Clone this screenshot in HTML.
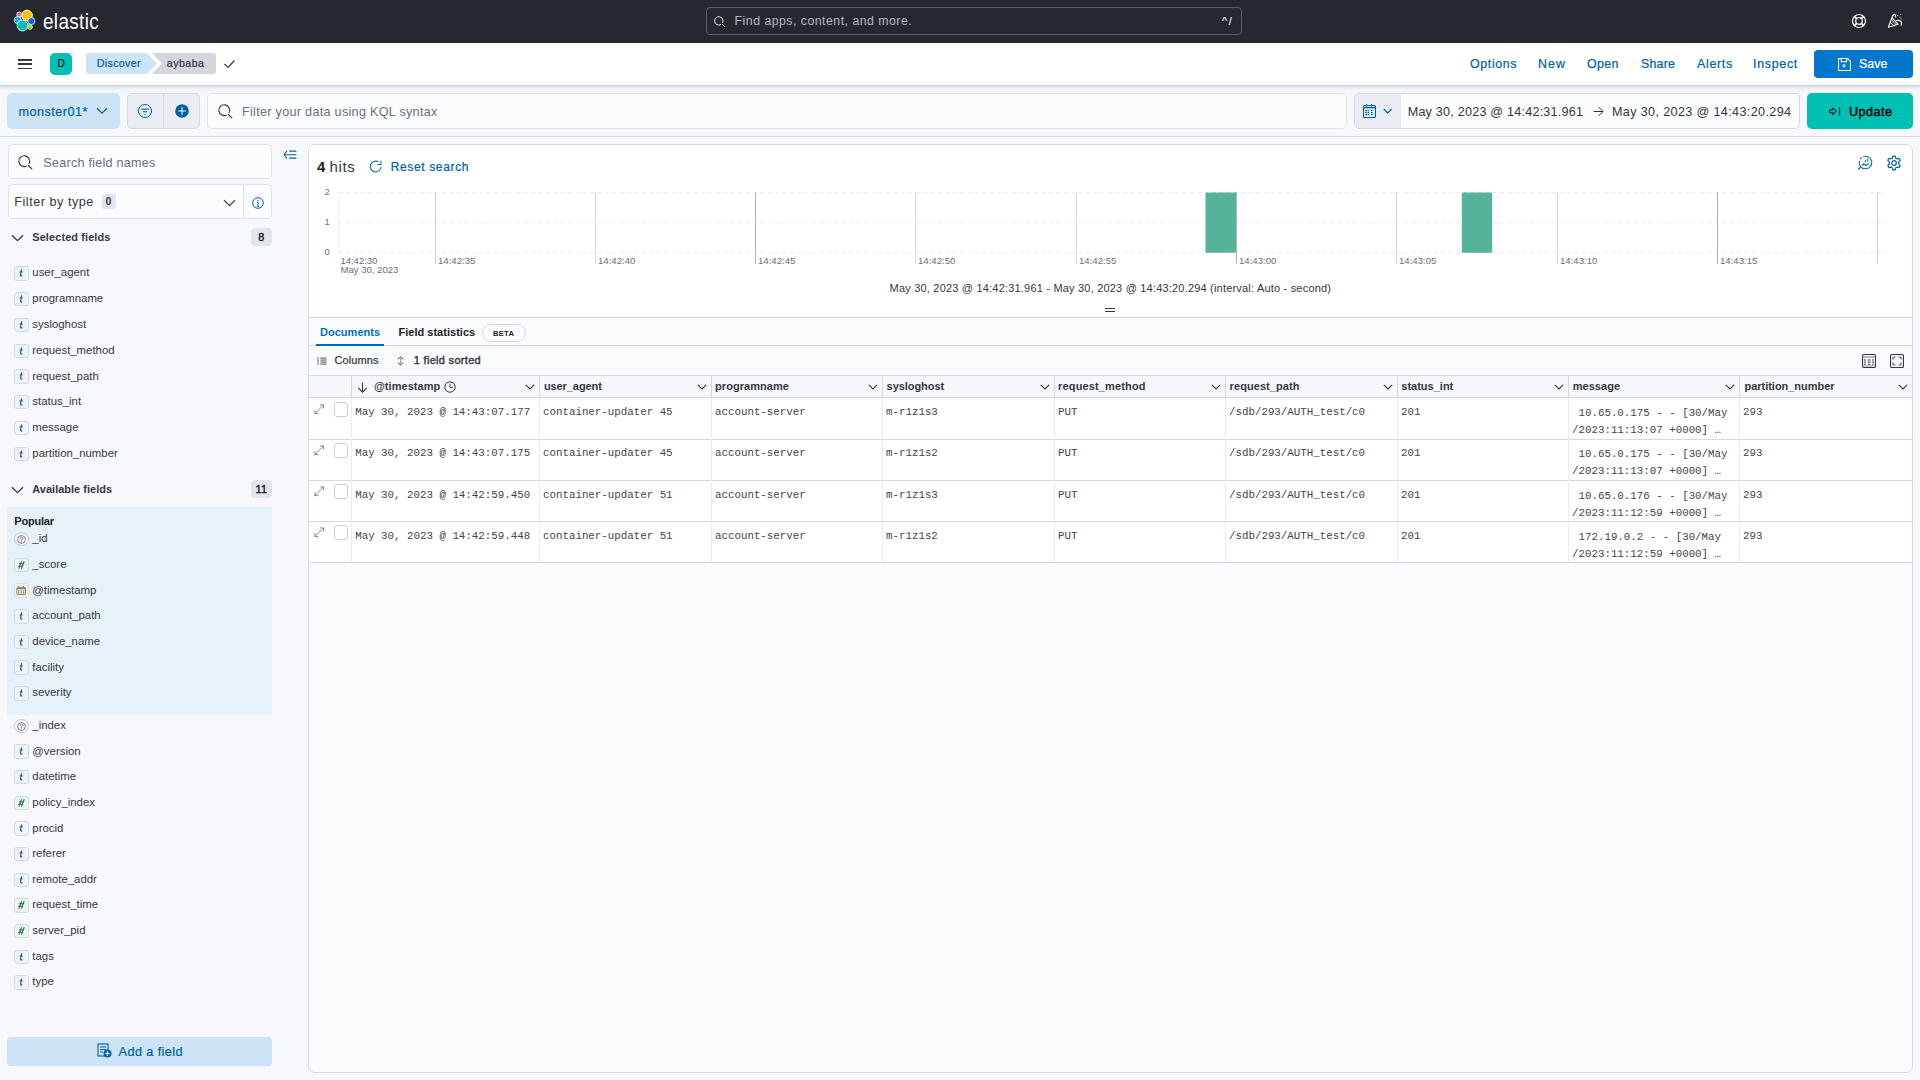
<!DOCTYPE html><html><head><meta charset="utf-8"><title>Discover - Elastic</title><style>
*{margin:0;padding:0}
html,body{width:1920px;height:1080px;overflow:hidden;background:#f7f8fc}
.a{position:absolute}
div.a{line-height:1;white-space:pre}
.s{font-family:"Liberation Sans",sans-serif}
.m{font-family:"Liberation Mono",monospace}
svg.a{overflow:visible}
</style></head><body><div class="a" style="left:0px;top:0px;width:1920px;height:42.5px;background:#25282f"></div>
<svg class="a" style="left:13px;top:9px;" width="24" height="24" viewBox="0 0 24 24">
<g stroke="#fff" stroke-width="0.8">
<circle cx="6.2" cy="5.4" r="2.4" fill="#f04e98"/>
<circle cx="14" cy="6.6" r="5.5" fill="#fec514"/>
<circle cx="4.7" cy="11.1" r="3.6" fill="#1ba9f5"/>
<circle cx="9.5" cy="16.6" r="5.4" fill="#00bfb3"/>
<circle cx="18.4" cy="12.1" r="3.5" fill="#0b64dd"/>
<circle cx="16.9" cy="18" r="2.4" fill="#93c90e"/>
</g></svg>
<div id="t0" class="a s" style="left:43.40px;top:11.00px;font-size:22px;color:#fff;letter-spacing:0.03em;letter-spacing:0.4px;transform:scaleX(0.86);transform-origin:0 0;">elastic</div>
<div class="a" style="left:706px;top:7px;width:536px;height:27.5px;border:1px solid #5a5e66;border-radius:4px;box-sizing:border-box;background:#25282f"></div>
<svg class="a" style="left:713.5px;top:16px;" width="11.700000000000001" height="11.700000000000001" viewBox="0 0 11.700000000000001 11.700000000000001"><g transform="scale(0.78)"><path d="M8.9 10.88 A5.4 5.4 0 1 1 10.88 8.9" fill="none" stroke="#dfe5ef" stroke-width="1.282051282051282"/><path d="M10.5 10.5 L13.8 13.8" stroke="#dfe5ef" stroke-width="1.282051282051282" stroke-linecap="round"/></g></svg>
<div id="t1" class="a s" style="left:734.60px;top:15.00px;font-size:12.3px;color:#b1b8c3;letter-spacing:0.489px;">Find apps, content, and more.</div>
<div id="t2" class="a s" style="left:1222.00px;top:16.00px;font-size:11px;color:#dfe5ef;-webkit-text-stroke-width:0.22px;letter-spacing:0.03em;letter-spacing:1.5px;">^/</div>
<svg class="a" style="left:1851px;top:13px;" width="16" height="16" viewBox="0 0 16 16"><circle cx="8" cy="8" r="6.5" fill="none" stroke="#fff" stroke-width="1.2"/><circle cx="8" cy="8" r="3.3" fill="none" stroke="#fff" stroke-width="1.2"/><path d="M3.2 3.2 L5.8 5.8 M12.8 3.2 L10.2 5.8 M3.2 12.8 L5.8 10.2 M12.8 12.8 L10.2 10.2" stroke="#fff" stroke-width="1.7"/></svg>
<svg class="a" style="left:1886px;top:13px;" width="18" height="17" viewBox="0 0 18 17"><g fill="none" stroke="#fff" stroke-width="1.15" stroke-linejoin="round" stroke-linecap="round"><path d="M2.4 14.2 L6 4.6 L12.1 11.3 Z"/><path d="M4.6 9.4 L8.1 13 M5.6 6.8 L10 11.6" stroke-width="0.9"/><path d="M6.4 4.4 Q6.6 1.3 8.2 1.3 Q9.7 1.4 9.6 3.9"/><path d="M10.6 7.6 Q13.1 6.9 14.9 8.4 Q16.1 9.6 15.1 12.1"/></g><g fill="#fff"><circle cx="11.6" cy="2.6" r="0.65"/><circle cx="14.6" cy="1.3" r="0.6"/><circle cx="14.2" cy="4.1" r="0.6"/><circle cx="15.2" cy="6" r="0.55"/></g></svg>
<div class="a" style="left:0px;top:42.5px;width:1920px;height:42.5px;background:#fff;box-shadow:0 1px 0 #cdd3de,0 2px 3px rgba(0,0,0,0.10),0 4px 7px rgba(0,0,0,0.04)"></div>
<div class="a" style="left:18px;top:59px;width:14px;height:1.5px;background:#343741"></div>
<div class="a" style="left:18px;top:63.3px;width:14px;height:1.5px;background:#343741"></div>
<div class="a" style="left:18px;top:67.8px;width:14px;height:1.5px;background:#343741"></div>
<div class="a" style="left:50px;top:53px;width:22px;height:22px;background:#00bfb3;border-radius:5px"></div>
<div id="t3" class="a s" style="left:57.60px;top:59.00px;font-size:10.2px;color:#000;letter-spacing:0.03em;letter-spacing:0;transform:scaleX(1.0)">D</div>
<svg class="a" style="left:86px;top:53px;" width="72" height="21" viewBox="0 0 72 21"><path d="M3 0 H61 L71 10.5 L61 21 H3 Q0 21 0 18 V3 Q0 0 3 0 Z" fill="#cce4f5"/></svg>
<svg class="a" style="left:152px;top:53px;" width="65" height="21" viewBox="0 0 65 21"><path d="M0 0 H61 Q64 0 64 3 V18 Q64 21 61 21 H0 L10 10.5 Z" fill="#d3d6dc"/></svg>
<div id="t4" class="a s" style="left:96.80px;top:58.00px;font-size:10.6px;color:#0061a6;-webkit-text-stroke-width:0.22px;letter-spacing:0.360px;">Discover</div>
<div id="t5" class="a s" style="left:166.80px;top:58.00px;font-size:10.6px;color:#343741;-webkit-text-stroke-width:0.22px;letter-spacing:0.467px;">aybaba</div>
<svg class="a" style="left:223px;top:59px;" width="13" height="10" viewBox="0 0 13 10"><path d="M1.5 5 L5 8.5 L11.5 1.5" fill="none" stroke="#343741" stroke-width="1.2"/></svg>
<div id="t6" class="a s" style="left:1470.10px;top:58.00px;font-size:12.4px;color:#0061a6;-webkit-text-stroke-width:0.22px;letter-spacing:0.607px;">Options</div>
<div id="t7" class="a s" style="left:1537.90px;top:58.00px;font-size:12.4px;color:#0061a6;-webkit-text-stroke-width:0.22px;letter-spacing:1.080px;">New</div>
<div id="t8" class="a s" style="left:1587.00px;top:58.00px;font-size:12.4px;color:#0061a6;-webkit-text-stroke-width:0.22px;letter-spacing:0.393px;">Open</div>
<div id="t9" class="a s" style="left:1640.90px;top:58.00px;font-size:12.4px;color:#0061a6;-webkit-text-stroke-width:0.22px;letter-spacing:0.232px;">Share</div>
<div id="t10" class="a s" style="left:1697.00px;top:58.00px;font-size:12.4px;color:#0061a6;-webkit-text-stroke-width:0.22px;letter-spacing:0.705px;">Alerts</div>
<div id="t11" class="a s" style="left:1753.00px;top:58.00px;font-size:12.4px;color:#0061a6;-webkit-text-stroke-width:0.22px;letter-spacing:0.716px;">Inspect</div>
<div class="a" style="left:1813.5px;top:50.3px;width:99.5px;height:27.5px;background:#0077cc;border-radius:4px"></div>
<svg class="a" style="left:1838px;top:58px;" width="13" height="13" viewBox="0 0 13 13"><path d="M0.55 0.55 H9.6 L12.45 3.4 V12.45 H0.55 Z" fill="none" stroke="#fff" stroke-width="1.1"/><path d="M3.3 0.6 V3.7 H8.6 V0.6" fill="none" stroke="#fff" stroke-width="1.1"/><circle cx="6" cy="7.8" r="1.25" fill="none" stroke="#fff" stroke-width="1"/></svg>
<div id="t12" class="a s" style="left:1859.00px;top:58.00px;font-size:12.4px;color:#fff;-webkit-text-stroke-width:0.22px;letter-spacing:0.083px;">Save</div>
<div class="a" style="left:0px;top:136px;width:1920px;height:1px;background:#d3dae6"></div>
<div class="a" style="left:7px;top:93px;width:113px;height:35.7px;background:#cce4f5;border-radius:5px"></div>
<div id="t13" class="a s" style="left:18.40px;top:106.00px;font-size:12.6px;color:#0061a6;-webkit-text-stroke-width:0.22px;letter-spacing:0.511px;">monster01*</div>
<svg class="a" style="left:96px;top:107px;" width="12" height="8" viewBox="0 0 12 8"><path d="M1 1.2 L6 6.2 L11 1.2" fill="none" stroke="#0061a6" stroke-width="1.3"/></svg>
<div class="a" style="left:127px;top:93px;width:72.7px;height:35.7px;background:#e9edf3;border:1px solid #d3dae6;border-radius:5px;box-sizing:border-box"></div>
<div class="a" style="left:163.3px;top:93px;width:1px;height:35.7px;background:#d3dae6"></div>
<svg class="a" style="left:138px;top:103.75px;" width="14" height="14" viewBox="0 0 14 14"><circle cx="7" cy="7" r="6.5" fill="none" stroke="#0061a6" stroke-width="1"/><path d="M3.3 5.1 H10.7" stroke="#0061a6" stroke-width="1.1"/><path d="M4.8 7.75 H9.2" stroke="#0061a6" stroke-width="1"/><path d="M6.4 10.4 H7.6" stroke="#0061a6" stroke-width="1"/></svg>
<svg class="a" style="left:174.6px;top:103.6px;" width="14" height="14" viewBox="0 0 14 14"><circle cx="7" cy="7" r="6.8" fill="#0061a6"/><path d="M7 3.2 V10.8 M3.2 7 H10.8" stroke="#fff" stroke-width="1"/></svg>
<div class="a" style="left:207px;top:93px;width:1139.5px;height:35.7px;background:#fbfcfd;border:1px solid #dfe4ec;border-radius:5px;box-sizing:border-box"></div>
<svg class="a" style="left:218px;top:104px;" width="15.0" height="15.0" viewBox="0 0 15.0 15.0"><g transform="scale(1.0)"><path d="M8.9 10.88 A5.4 5.4 0 1 1 10.88 8.9" fill="none" stroke="#343741" stroke-width="1.1"/><path d="M10.5 10.5 L13.8 13.8" stroke="#343741" stroke-width="1.1" stroke-linecap="round"/></g></svg>
<div id="t14" class="a s" style="left:242.00px;top:106.00px;font-size:12.6px;color:#69707d;letter-spacing:0.300px;">Filter your data using KQL syntax</div>
<div class="a" style="left:1354px;top:93px;width:445.5px;height:35.7px;background:#fbfcfd;border:1px solid #d3dae6;border-radius:5px;box-sizing:border-box"></div>
<div class="a" style="left:1355px;top:94px;width:46px;height:33.7px;background:#e9edf3;border-radius:4px 0 0 4px"></div>
<svg class="a" style="left:1363px;top:104px;" width="13" height="14" viewBox="0 0 13 14"><rect x="0.55" y="1.55" width="11.9" height="11.9" rx="1" fill="none" stroke="#0061a6" stroke-width="1.1"/><path d="M0.5 3.6 H12.5" stroke="#0061a6" stroke-width="1.4"/><path d="M3.6 0 V2.6 M8.6 0 V2.6" stroke="#0061a6" stroke-width="1"/><g fill="#0061a6"><rect x="2.3" y="6.0" width="1.6" height="1.2"/><rect x="4.6" y="6.0" width="1.6" height="1.2"/><rect x="8.0" y="6.0" width="1.6" height="1.2"/><rect x="2.3" y="8.0" width="1.6" height="1.2"/><rect x="4.6" y="8.0" width="1.6" height="1.2"/><rect x="8.0" y="8.0" width="1.6" height="1.2"/><rect x="2.3" y="10.0" width="1.6" height="1.2"/><rect x="4.6" y="10.0" width="1.6" height="1.2"/><rect x="8.0" y="10.0" width="1.6" height="1.2"/></g></svg>
<svg class="a" style="left:1382.5px;top:108px;" width="9.5" height="6.5" viewBox="0 0 9.5 6.5"><path d="M0.8 0.8 L4.75 5 L8.7 0.8" fill="none" stroke="#0061a6" stroke-width="1.2"/></svg>
<div id="t15" class="a s" style="left:1407.70px;top:106.00px;font-size:12.6px;color:#343741;letter-spacing:0.218px;">May 30, 2023 @ 14:42:31.961</div>
<svg class="a" style="left:1593px;top:105.5px;" width="11" height="11" viewBox="0 0 11 11"><path d="M0.5 5.5 H10 M5.5 1 L10 5.5 L5.5 10" fill="none" stroke="#343741" stroke-width="1"/></svg>
<div id="t16" class="a s" style="left:1612.00px;top:106.00px;font-size:12.6px;color:#343741;letter-spacing:0.361px;">May 30, 2023 @ 14:43:20.294</div>
<div class="a" style="left:1807px;top:93px;width:106px;height:35.7px;background:#00bfb3;border-radius:5px"></div>
<svg class="a" style="left:1828.5px;top:107px;" width="12" height="9" viewBox="0 0 12 9"><path d="M0.6 2.9 H3.9 V0.9 L7.3 4.3 L3.9 7.7 V5.7 H0.6 Z" fill="none" stroke="#000" stroke-width="1" stroke-linejoin="miter"/><path d="M10.6 0.3 V8.6" stroke="#000" stroke-width="1"/></svg>
<div id="t17" class="a s" style="left:1849.00px;top:106.00px;font-size:12.6px;color:#000;-webkit-text-stroke-width:0.4px;letter-spacing:0.479px;">Update</div>
<div class="a" style="left:7.5px;top:144px;width:264px;height:35px;background:#fbfcfd;border:1px solid #dfe4ec;border-radius:5px;box-sizing:border-box"></div>
<svg class="a" style="left:17.8px;top:155px;" width="15.0" height="15.0" viewBox="0 0 15.0 15.0"><g transform="scale(1.0)"><path d="M8.9 10.88 A5.4 5.4 0 1 1 10.88 8.9" fill="none" stroke="#343741" stroke-width="1.1"/><path d="M10.5 10.5 L13.8 13.8" stroke="#343741" stroke-width="1.1" stroke-linecap="round"/></g></svg>
<div id="t18" class="a s" style="left:43.30px;top:157.00px;font-size:12.6px;color:#69707d;letter-spacing:0.247px;">Search field names</div>
<div class="a" style="left:7.5px;top:184.2px;width:264px;height:35.3px;background:#fbfcfd;border:1px solid #dfe4ec;border-radius:5px;box-sizing:border-box"></div>
<div class="a" style="left:243px;top:185px;width:1px;height:33.5px;background:#dfe4ec"></div>
<div id="t19" class="a s" style="left:14.30px;top:196.00px;font-size:12.6px;color:#343741;letter-spacing:0.532px;">Filter by type</div>
<div class="a" style="left:102px;top:194px;width:14px;height:14.5px;background:#e0e5ee;border-radius:3px"></div>
<div id="t20" class="a s" style="left:105.50px;top:196.00px;font-size:10.5px;color:#343741;font-weight:700;letter-spacing:0.03em;">0</div>
<svg class="a" style="left:223px;top:198.5px;" width="13" height="8" viewBox="0 0 13 8"><path d="M1 1.2 L6.5 6.7 L12 1.2" fill="none" stroke="#343741" stroke-width="1.2"/></svg>
<svg class="a" style="left:252px;top:197px;" width="12" height="12" viewBox="0 0 12 12"><circle cx="6" cy="6" r="5.3" fill="none" stroke="#0061a6" stroke-width="1"/><path d="M6 5.2 V9.2 M4.9 9.2 H7.2 M4.9 5.3 H6.1" fill="none" stroke="#0061a6" stroke-width="0.95"/><circle cx="6" cy="3.4" r="0.7" fill="#0061a6"/></svg>
<svg class="a" style="left:283px;top:150px;" width="14" height="9" viewBox="0 0 14 9"><path d="M3.9 0.9 L1.1 4.7 L3.9 8.5" fill="none" stroke="#0061a6" stroke-width="1.05"/><path d="M1.2 4.7 H13.3 M6.3 1.1 H13.3 M6.3 8.1 H13.3" stroke="#0061a6" stroke-width="1.05"/></svg>
<svg class="a" style="left:10.5px;top:233.5px;" width="13" height="8" viewBox="0 0 13 8"><path d="M1 1.2 L6.5 6.7 L12 1.2" fill="none" stroke="#343741" stroke-width="1.3"/></svg>
<div id="t21" class="a s" style="left:32.30px;top:232.00px;font-size:10.9px;color:#343741;font-weight:700;letter-spacing:0.128px;">Selected fields</div>
<div class="a" style="left:251px;top:228.3px;width:20.7px;height:17.3px;background:#e0e5ee;border-radius:4px"></div>
<div id="t22" class="a s" style="left:258.20px;top:232.00px;font-size:10.8px;color:#1a1c21;-webkit-text-stroke-width:0.4px;letter-spacing:0.03em;">8</div>
<svg class="a" style="left:10.5px;top:485.6px;" width="13" height="8" viewBox="0 0 13 8"><path d="M1 1.2 L6.5 6.7 L12 1.2" fill="none" stroke="#343741" stroke-width="1.3"/></svg>
<div id="t23" class="a s" style="left:32.30px;top:484.00px;font-size:10.9px;color:#343741;font-weight:700;letter-spacing:0.058px;">Available fields</div>
<div class="a" style="left:251px;top:480.40000000000003px;width:20.7px;height:17.3px;background:#e0e5ee;border-radius:4px"></div>
<div id="t24" class="a s" style="left:255.50px;top:484.00px;font-size:10.8px;color:#1a1c21;-webkit-text-stroke-width:0.4px;letter-spacing:0.03em;">11</div>
<div class="a" style="left:14.3px;top:266.3px;width:14.4px;height:14.4px;background:#eef3f9;border:1px solid #c9dbed;border-radius:3px;box-sizing:border-box"></div>
<svg class="a" style="left:14.3px;top:266.3px;" width="14.4" height="14.4" viewBox="0 0 14.4 14.4"><path d="M7.5 4.0 L6.6 9.0 Q6.4 10.2 7.9 9.95" fill="none" stroke="#3d5f83" stroke-width="1.3" stroke-linecap="round"/><path d="M5.9 5.9 H8.4" stroke="#3d5f83" stroke-width="1.0" stroke-linecap="round"/></svg>
<div id="t25" class="a s" style="left:32.30px;top:267.00px;font-size:11.4px;color:#343741;letter-spacing:0.03em;letter-spacing:0;">user_agent</div>
<div class="a" style="left:14.3px;top:292.05px;width:14.4px;height:14.4px;background:#eef3f9;border:1px solid #c9dbed;border-radius:3px;box-sizing:border-box"></div>
<svg class="a" style="left:14.3px;top:292.05px;" width="14.4" height="14.4" viewBox="0 0 14.4 14.4"><path d="M7.5 4.0 L6.6 9.0 Q6.4 10.2 7.9 9.95" fill="none" stroke="#3d5f83" stroke-width="1.3" stroke-linecap="round"/><path d="M5.9 5.9 H8.4" stroke="#3d5f83" stroke-width="1.0" stroke-linecap="round"/></svg>
<div id="t26" class="a s" style="left:32.30px;top:293.00px;font-size:11.4px;color:#343741;letter-spacing:0.03em;letter-spacing:0;">programname</div>
<div class="a" style="left:14.3px;top:317.8px;width:14.4px;height:14.4px;background:#eef3f9;border:1px solid #c9dbed;border-radius:3px;box-sizing:border-box"></div>
<svg class="a" style="left:14.3px;top:317.8px;" width="14.4" height="14.4" viewBox="0 0 14.4 14.4"><path d="M7.5 4.0 L6.6 9.0 Q6.4 10.2 7.9 9.95" fill="none" stroke="#3d5f83" stroke-width="1.3" stroke-linecap="round"/><path d="M5.9 5.9 H8.4" stroke="#3d5f83" stroke-width="1.0" stroke-linecap="round"/></svg>
<div id="t27" class="a s" style="left:32.30px;top:319.00px;font-size:11.4px;color:#343741;letter-spacing:0.03em;letter-spacing:0;">sysloghost</div>
<div class="a" style="left:14.3px;top:343.55px;width:14.4px;height:14.4px;background:#eef3f9;border:1px solid #c9dbed;border-radius:3px;box-sizing:border-box"></div>
<svg class="a" style="left:14.3px;top:343.55px;" width="14.4" height="14.4" viewBox="0 0 14.4 14.4"><path d="M7.5 4.0 L6.6 9.0 Q6.4 10.2 7.9 9.95" fill="none" stroke="#3d5f83" stroke-width="1.3" stroke-linecap="round"/><path d="M5.9 5.9 H8.4" stroke="#3d5f83" stroke-width="1.0" stroke-linecap="round"/></svg>
<div id="t28" class="a s" style="left:32.30px;top:345.00px;font-size:11.4px;color:#343741;letter-spacing:0.03em;letter-spacing:0;">request_method</div>
<div class="a" style="left:14.3px;top:369.3px;width:14.4px;height:14.4px;background:#eef3f9;border:1px solid #c9dbed;border-radius:3px;box-sizing:border-box"></div>
<svg class="a" style="left:14.3px;top:369.3px;" width="14.4" height="14.4" viewBox="0 0 14.4 14.4"><path d="M7.5 4.0 L6.6 9.0 Q6.4 10.2 7.9 9.95" fill="none" stroke="#3d5f83" stroke-width="1.3" stroke-linecap="round"/><path d="M5.9 5.9 H8.4" stroke="#3d5f83" stroke-width="1.0" stroke-linecap="round"/></svg>
<div id="t29" class="a s" style="left:32.30px;top:371.00px;font-size:11.4px;color:#343741;letter-spacing:0.03em;letter-spacing:0;">request_path</div>
<div class="a" style="left:14.3px;top:395.05px;width:14.4px;height:14.4px;background:#eef3f9;border:1px solid #c9dbed;border-radius:3px;box-sizing:border-box"></div>
<svg class="a" style="left:14.3px;top:395.05px;" width="14.4" height="14.4" viewBox="0 0 14.4 14.4"><path d="M7.5 4.0 L6.6 9.0 Q6.4 10.2 7.9 9.95" fill="none" stroke="#3d5f83" stroke-width="1.3" stroke-linecap="round"/><path d="M5.9 5.9 H8.4" stroke="#3d5f83" stroke-width="1.0" stroke-linecap="round"/></svg>
<div id="t30" class="a s" style="left:32.30px;top:396.00px;font-size:11.4px;color:#343741;letter-spacing:0.03em;letter-spacing:0;">status_int</div>
<div class="a" style="left:14.3px;top:420.8px;width:14.4px;height:14.4px;background:#eef3f9;border:1px solid #c9dbed;border-radius:3px;box-sizing:border-box"></div>
<svg class="a" style="left:14.3px;top:420.8px;" width="14.4" height="14.4" viewBox="0 0 14.4 14.4"><path d="M7.5 4.0 L6.6 9.0 Q6.4 10.2 7.9 9.95" fill="none" stroke="#3d5f83" stroke-width="1.3" stroke-linecap="round"/><path d="M5.9 5.9 H8.4" stroke="#3d5f83" stroke-width="1.0" stroke-linecap="round"/></svg>
<div id="t31" class="a s" style="left:32.30px;top:422.00px;font-size:11.4px;color:#343741;letter-spacing:0.03em;letter-spacing:0;">message</div>
<div class="a" style="left:14.3px;top:446.55px;width:14.4px;height:14.4px;background:#eef3f9;border:1px solid #c9dbed;border-radius:3px;box-sizing:border-box"></div>
<svg class="a" style="left:14.3px;top:446.55px;" width="14.4" height="14.4" viewBox="0 0 14.4 14.4"><path d="M7.5 4.0 L6.6 9.0 Q6.4 10.2 7.9 9.95" fill="none" stroke="#3d5f83" stroke-width="1.3" stroke-linecap="round"/><path d="M5.9 5.9 H8.4" stroke="#3d5f83" stroke-width="1.0" stroke-linecap="round"/></svg>
<div id="t32" class="a s" style="left:32.30px;top:448.00px;font-size:11.4px;color:#343741;letter-spacing:0.03em;letter-spacing:0;">partition_number</div>
<div class="a" style="left:7.1px;top:507px;width:264.8px;height:207.7px;background:#e6f1fa"></div>
<div id="t33" class="a s" style="left:14.35px;top:516.00px;font-size:11px;color:#1a1c21;font-weight:700;letter-spacing:-0.220px;">Popular</div>
<div class="a" style="left:14.3px;top:532.0999999999999px;width:14.4px;height:14.4px;background:#f1f2f4;border:1px solid #c8ccd3;border-radius:50%;box-sizing:border-box"></div>
<svg class="a" style="left:17.0px;top:534.8px;" width="9" height="9" viewBox="0 0 9 9"><circle cx="4.5" cy="4.5" r="3.9" fill="none" stroke="#69707d" stroke-width="0.8"/><path d="M3.2 3.6 Q3.2 2.3 4.5 2.3 Q5.8 2.3 5.8 3.5 Q5.8 4.4 4.5 4.9 V5.7" fill="none" stroke="#69707d" stroke-width="0.8"/><circle cx="4.5" cy="6.9" r="0.5" fill="#69707d"/></svg>
<div id="t34" class="a s" style="left:32.30px;top:533.00px;font-size:11.4px;color:#343741;letter-spacing:0.03em;letter-spacing:0;">_id</div>
<div class="a" style="left:14.3px;top:557.7699999999999px;width:14.4px;height:14.4px;background:#eaf5f0;border:1px solid #c4e4d6;border-radius:3px;box-sizing:border-box"></div>
<svg class="a" style="left:14.3px;top:557.7699999999999px;" width="14.4" height="14.4" viewBox="0 0 14.4 14.4"><path d="M4.8 10.6 L7.6 3.3 M7.4 10.6 L10.2 3.3 M5.1 5.7 H10.2 M4.1 8.3 H9.2" fill="none" stroke="#2d6a50" stroke-width="1.05"/></svg>
<div id="t35" class="a s" style="left:32.30px;top:559.00px;font-size:11.4px;color:#343741;letter-spacing:0.03em;letter-spacing:0;">_score</div>
<div class="a" style="left:14.3px;top:583.4399999999999px;width:14.4px;height:14.4px;background:#f6f1ea;border:1px solid #e8ddcd;border-radius:3px;box-sizing:border-box"></div>
<svg class="a" style="left:14.3px;top:583.4399999999999px;" width="14.4" height="14.4" viewBox="0 0 14.4 14.4"><rect x="2.9" y="4.3" width="8.6" height="7.3" rx="0.6" fill="none" stroke="#857b6b" stroke-width="1"/><path d="M2.9 5.6 H11.5" stroke="#857b6b" stroke-width="1.2"/><path d="M4.9 2.9 V5 M9.5 2.9 V5" stroke="#857b6b" stroke-width="1"/><g fill="#857b6b"><rect x="4.1" y="7.3" width="1.4" height="1.2"/><rect x="6.5" y="7.3" width="1.4" height="1.2"/><rect x="8.9" y="7.3" width="1.4" height="1.2"/><rect x="4.1" y="9.3" width="1.4" height="1.2"/><rect x="6.5" y="9.3" width="1.4" height="1.2"/><rect x="8.9" y="9.3" width="1.4" height="1.2"/></g></svg>
<div id="t36" class="a s" style="left:32.30px;top:585.00px;font-size:11.4px;color:#343741;letter-spacing:0.03em;letter-spacing:0;">@timestamp</div>
<div class="a" style="left:14.3px;top:609.1099999999999px;width:14.4px;height:14.4px;background:#eef3f9;border:1px solid #c9dbed;border-radius:3px;box-sizing:border-box"></div>
<svg class="a" style="left:14.3px;top:609.1099999999999px;" width="14.4" height="14.4" viewBox="0 0 14.4 14.4"><path d="M7.5 4.0 L6.6 9.0 Q6.4 10.2 7.9 9.95" fill="none" stroke="#3d5f83" stroke-width="1.3" stroke-linecap="round"/><path d="M5.9 5.9 H8.4" stroke="#3d5f83" stroke-width="1.0" stroke-linecap="round"/></svg>
<div id="t37" class="a s" style="left:32.30px;top:610.00px;font-size:11.4px;color:#343741;letter-spacing:0.03em;letter-spacing:0;">account_path</div>
<div class="a" style="left:14.3px;top:634.78px;width:14.4px;height:14.4px;background:#eef3f9;border:1px solid #c9dbed;border-radius:3px;box-sizing:border-box"></div>
<svg class="a" style="left:14.3px;top:634.78px;" width="14.4" height="14.4" viewBox="0 0 14.4 14.4"><path d="M7.5 4.0 L6.6 9.0 Q6.4 10.2 7.9 9.95" fill="none" stroke="#3d5f83" stroke-width="1.3" stroke-linecap="round"/><path d="M5.9 5.9 H8.4" stroke="#3d5f83" stroke-width="1.0" stroke-linecap="round"/></svg>
<div id="t38" class="a s" style="left:32.30px;top:636.00px;font-size:11.4px;color:#343741;letter-spacing:0.03em;letter-spacing:0;">device_name</div>
<div class="a" style="left:14.3px;top:660.4499999999999px;width:14.4px;height:14.4px;background:#eef3f9;border:1px solid #c9dbed;border-radius:3px;box-sizing:border-box"></div>
<svg class="a" style="left:14.3px;top:660.4499999999999px;" width="14.4" height="14.4" viewBox="0 0 14.4 14.4"><path d="M7.5 4.0 L6.6 9.0 Q6.4 10.2 7.9 9.95" fill="none" stroke="#3d5f83" stroke-width="1.3" stroke-linecap="round"/><path d="M5.9 5.9 H8.4" stroke="#3d5f83" stroke-width="1.0" stroke-linecap="round"/></svg>
<div id="t39" class="a s" style="left:32.30px;top:662.00px;font-size:11.4px;color:#343741;letter-spacing:0.03em;letter-spacing:0;">facility</div>
<div class="a" style="left:14.3px;top:686.1199999999999px;width:14.4px;height:14.4px;background:#eef3f9;border:1px solid #c9dbed;border-radius:3px;box-sizing:border-box"></div>
<svg class="a" style="left:14.3px;top:686.1199999999999px;" width="14.4" height="14.4" viewBox="0 0 14.4 14.4"><path d="M7.5 4.0 L6.6 9.0 Q6.4 10.2 7.9 9.95" fill="none" stroke="#3d5f83" stroke-width="1.3" stroke-linecap="round"/><path d="M5.9 5.9 H8.4" stroke="#3d5f83" stroke-width="1.0" stroke-linecap="round"/></svg>
<div id="t40" class="a s" style="left:32.30px;top:687.00px;font-size:11.4px;color:#343741;letter-spacing:0.03em;letter-spacing:0;">severity</div>
<div class="a" style="left:14.3px;top:718.8px;width:14.4px;height:14.4px;background:#f1f2f4;border:1px solid #c8ccd3;border-radius:50%;box-sizing:border-box"></div>
<svg class="a" style="left:17.0px;top:721.5px;" width="9" height="9" viewBox="0 0 9 9"><circle cx="4.5" cy="4.5" r="3.9" fill="none" stroke="#69707d" stroke-width="0.8"/><path d="M3.2 3.6 Q3.2 2.3 4.5 2.3 Q5.8 2.3 5.8 3.5 Q5.8 4.4 4.5 4.9 V5.7" fill="none" stroke="#69707d" stroke-width="0.8"/><circle cx="4.5" cy="6.9" r="0.5" fill="#69707d"/></svg>
<div id="t41" class="a s" style="left:32.30px;top:720.00px;font-size:11.4px;color:#343741;letter-spacing:0.03em;letter-spacing:0;">_index</div>
<div class="a" style="left:14.3px;top:744.4399999999999px;width:14.4px;height:14.4px;background:#eef3f9;border:1px solid #c9dbed;border-radius:3px;box-sizing:border-box"></div>
<svg class="a" style="left:14.3px;top:744.4399999999999px;" width="14.4" height="14.4" viewBox="0 0 14.4 14.4"><path d="M7.5 4.0 L6.6 9.0 Q6.4 10.2 7.9 9.95" fill="none" stroke="#3d5f83" stroke-width="1.3" stroke-linecap="round"/><path d="M5.9 5.9 H8.4" stroke="#3d5f83" stroke-width="1.0" stroke-linecap="round"/></svg>
<div id="t42" class="a s" style="left:32.30px;top:746.00px;font-size:11.4px;color:#343741;letter-spacing:0.03em;letter-spacing:0;">@version</div>
<div class="a" style="left:14.3px;top:770.0799999999999px;width:14.4px;height:14.4px;background:#eef3f9;border:1px solid #c9dbed;border-radius:3px;box-sizing:border-box"></div>
<svg class="a" style="left:14.3px;top:770.0799999999999px;" width="14.4" height="14.4" viewBox="0 0 14.4 14.4"><path d="M7.5 4.0 L6.6 9.0 Q6.4 10.2 7.9 9.95" fill="none" stroke="#3d5f83" stroke-width="1.3" stroke-linecap="round"/><path d="M5.9 5.9 H8.4" stroke="#3d5f83" stroke-width="1.0" stroke-linecap="round"/></svg>
<div id="t43" class="a s" style="left:32.30px;top:771.00px;font-size:11.4px;color:#343741;letter-spacing:0.03em;letter-spacing:0;">datetime</div>
<div class="a" style="left:14.3px;top:795.7199999999999px;width:14.4px;height:14.4px;background:#eaf5f0;border:1px solid #c4e4d6;border-radius:3px;box-sizing:border-box"></div>
<svg class="a" style="left:14.3px;top:795.7199999999999px;" width="14.4" height="14.4" viewBox="0 0 14.4 14.4"><path d="M4.8 10.6 L7.6 3.3 M7.4 10.6 L10.2 3.3 M5.1 5.7 H10.2 M4.1 8.3 H9.2" fill="none" stroke="#2d6a50" stroke-width="1.05"/></svg>
<div id="t44" class="a s" style="left:32.30px;top:797.00px;font-size:11.4px;color:#343741;letter-spacing:0.03em;letter-spacing:0;">policy_index</div>
<div class="a" style="left:14.3px;top:821.3599999999999px;width:14.4px;height:14.4px;background:#eef3f9;border:1px solid #c9dbed;border-radius:3px;box-sizing:border-box"></div>
<svg class="a" style="left:14.3px;top:821.3599999999999px;" width="14.4" height="14.4" viewBox="0 0 14.4 14.4"><path d="M7.5 4.0 L6.6 9.0 Q6.4 10.2 7.9 9.95" fill="none" stroke="#3d5f83" stroke-width="1.3" stroke-linecap="round"/><path d="M5.9 5.9 H8.4" stroke="#3d5f83" stroke-width="1.0" stroke-linecap="round"/></svg>
<div id="t45" class="a s" style="left:32.30px;top:823.00px;font-size:11.4px;color:#343741;letter-spacing:0.03em;letter-spacing:0;">procid</div>
<div class="a" style="left:14.3px;top:847.0px;width:14.4px;height:14.4px;background:#eef3f9;border:1px solid #c9dbed;border-radius:3px;box-sizing:border-box"></div>
<svg class="a" style="left:14.3px;top:847.0px;" width="14.4" height="14.4" viewBox="0 0 14.4 14.4"><path d="M7.5 4.0 L6.6 9.0 Q6.4 10.2 7.9 9.95" fill="none" stroke="#3d5f83" stroke-width="1.3" stroke-linecap="round"/><path d="M5.9 5.9 H8.4" stroke="#3d5f83" stroke-width="1.0" stroke-linecap="round"/></svg>
<div id="t46" class="a s" style="left:32.30px;top:848.00px;font-size:11.4px;color:#343741;letter-spacing:0.03em;letter-spacing:0;">referer</div>
<div class="a" style="left:14.3px;top:872.64px;width:14.4px;height:14.4px;background:#eef3f9;border:1px solid #c9dbed;border-radius:3px;box-sizing:border-box"></div>
<svg class="a" style="left:14.3px;top:872.64px;" width="14.4" height="14.4" viewBox="0 0 14.4 14.4"><path d="M7.5 4.0 L6.6 9.0 Q6.4 10.2 7.9 9.95" fill="none" stroke="#3d5f83" stroke-width="1.3" stroke-linecap="round"/><path d="M5.9 5.9 H8.4" stroke="#3d5f83" stroke-width="1.0" stroke-linecap="round"/></svg>
<div id="t47" class="a s" style="left:32.30px;top:874.00px;font-size:11.4px;color:#343741;letter-spacing:0.03em;letter-spacing:0;">remote_addr</div>
<div class="a" style="left:14.3px;top:898.28px;width:14.4px;height:14.4px;background:#eaf5f0;border:1px solid #c4e4d6;border-radius:3px;box-sizing:border-box"></div>
<svg class="a" style="left:14.3px;top:898.28px;" width="14.4" height="14.4" viewBox="0 0 14.4 14.4"><path d="M4.8 10.6 L7.6 3.3 M7.4 10.6 L10.2 3.3 M5.1 5.7 H10.2 M4.1 8.3 H9.2" fill="none" stroke="#2d6a50" stroke-width="1.05"/></svg>
<div id="t48" class="a s" style="left:32.30px;top:899.00px;font-size:11.4px;color:#343741;letter-spacing:0.03em;letter-spacing:0;">request_time</div>
<div class="a" style="left:14.3px;top:923.92px;width:14.4px;height:14.4px;background:#eaf5f0;border:1px solid #c4e4d6;border-radius:3px;box-sizing:border-box"></div>
<svg class="a" style="left:14.3px;top:923.92px;" width="14.4" height="14.4" viewBox="0 0 14.4 14.4"><path d="M4.8 10.6 L7.6 3.3 M7.4 10.6 L10.2 3.3 M5.1 5.7 H10.2 M4.1 8.3 H9.2" fill="none" stroke="#2d6a50" stroke-width="1.05"/></svg>
<div id="t49" class="a s" style="left:32.30px;top:925.00px;font-size:11.4px;color:#343741;letter-spacing:0.03em;letter-spacing:0;">server_pid</div>
<div class="a" style="left:14.3px;top:949.56px;width:14.4px;height:14.4px;background:#eef3f9;border:1px solid #c9dbed;border-radius:3px;box-sizing:border-box"></div>
<svg class="a" style="left:14.3px;top:949.56px;" width="14.4" height="14.4" viewBox="0 0 14.4 14.4"><path d="M7.5 4.0 L6.6 9.0 Q6.4 10.2 7.9 9.95" fill="none" stroke="#3d5f83" stroke-width="1.3" stroke-linecap="round"/><path d="M5.9 5.9 H8.4" stroke="#3d5f83" stroke-width="1.0" stroke-linecap="round"/></svg>
<div id="t50" class="a s" style="left:32.30px;top:951.00px;font-size:11.4px;color:#343741;letter-spacing:0.03em;letter-spacing:0;">tags</div>
<div class="a" style="left:14.3px;top:975.1999999999999px;width:14.4px;height:14.4px;background:#eef3f9;border:1px solid #c9dbed;border-radius:3px;box-sizing:border-box"></div>
<svg class="a" style="left:14.3px;top:975.1999999999999px;" width="14.4" height="14.4" viewBox="0 0 14.4 14.4"><path d="M7.5 4.0 L6.6 9.0 Q6.4 10.2 7.9 9.95" fill="none" stroke="#3d5f83" stroke-width="1.3" stroke-linecap="round"/><path d="M5.9 5.9 H8.4" stroke="#3d5f83" stroke-width="1.0" stroke-linecap="round"/></svg>
<div id="t51" class="a s" style="left:32.30px;top:976.00px;font-size:11.4px;color:#343741;letter-spacing:0.03em;letter-spacing:0;">type</div>
<div class="a" style="left:7.1px;top:1037px;width:265px;height:28.7px;background:#cce4f5;border-radius:4px"></div>
<svg class="a" style="left:97px;top:1043px;" width="15" height="15" viewBox="0 0 15 15"><rect x="1" y="1" width="10" height="12" fill="none" stroke="#0061a6" stroke-width="1.1"/><path d="M3 4 H9 M3 6.5 H9 M3 9 H6" stroke="#0061a6" stroke-width="1.1"/><circle cx="10.5" cy="10.5" r="4" fill="#0061a6"/><path d="M10.5 8.3 V12.7 M8.3 10.5 H12.7" stroke="#fff" stroke-width="1.2"/></svg>
<div id="t52" class="a s" style="left:118.60px;top:1046.00px;font-size:12.6px;color:#0061a6;-webkit-text-stroke-width:0.22px;letter-spacing:0.439px;">Add a field</div>
<div class="a" style="left:308px;top:144px;width:1605px;height:929px;background:#fafbfd;border:1px solid #d3dae6;border-radius:7px;box-sizing:border-box"></div>
<div class="a" style="left:309px;top:145px;width:1603px;height:172px;background:#fff;border-radius:6px 6px 0 0"></div>
<div class="a" style="left:309px;top:317px;width:1603px;height:1px;background:#d3dae6"></div>
<div id="t53" class="a s" style="left:316.90px;top:159.00px;font-size:15px;color:#1a1c21;font-weight:700;letter-spacing:0.03em;">4</div>
<div id="t54" class="a s" style="left:329.50px;top:159.00px;font-size:15px;color:#343741;letter-spacing:0.619px;">hits</div>
<svg class="a" style="left:369.3px;top:159.8px;" width="14" height="14" viewBox="0 0 14 14"><g fill="none" stroke="#0061a6" stroke-width="1.05"><path d="M9.4 1.82 A5.4 5.4 0 1 0 12.08 6.97"/><path d="M11.9 0.7 V4.1 Q11.9 4.5 11.5 4.5 L8.4 4.5"/></g></svg>
<div id="t55" class="a s" style="left:390.70px;top:161.00px;font-size:12px;color:#0061a6;-webkit-text-stroke-width:0.22px;letter-spacing:0.643px;">Reset search</div>
<svg class="a" style="left:1857px;top:155px;" width="16" height="16" viewBox="0 0 16 16"><g fill="none" stroke="#0061a6" stroke-width="1.05"><path d="M6.35 1.58 A6.3 6.3 0 1 1 2.41 5.87"/><path d="M3.04 4.35 A6.3 6.3 0 0 1 4.89 2.34"/><path d="M3.7 12.1 L1.1 14.5"/><path d="M8.4 5.3 V7.3 M10.8 3.6 V6.8"/><path d="M5.2 10.7 L6.7 8.8 L9.2 10.5 L11.6 8.4"/></g></svg>
<svg class="a" style="left:1886px;top:155px;" width="16" height="16" viewBox="0 0 16 16"><g fill="none" stroke="#0061a6" stroke-width="1.2"><circle cx="8" cy="8" r="2.3"/><path d="M6.8 1.2 H9.2 L9.6 3 L11.2 3.9 L13 3.3 L14.2 5.4 L12.8 6.7 V9.3 L14.2 10.6 L13 12.7 L11.2 12.1 L9.6 13 L9.2 14.8 H6.8 L6.4 13 L4.8 12.1 L3 12.7 L1.8 10.6 L3.2 9.3 V6.7 L1.8 5.4 L3 3.3 L4.8 3.9 L6.4 3 Z" stroke-linejoin="round"/></g></svg>
<svg class="a" style="left:0;top:0" width="1920" height="1080"><line x1="338.7" y1="192.5" x2="1886" y2="192.5" stroke="#e6e9ee" stroke-width="1" stroke-dasharray="3.7 3.7"/><line x1="338.7" y1="222.6" x2="1886" y2="222.6" stroke="#e6e9ee" stroke-width="1" stroke-dasharray="3.7 3.7"/><line x1="338.7" y1="252.7" x2="1886" y2="252.7" stroke="#e6e9ee" stroke-width="1" stroke-dasharray="3.7 3.7"/><line x1="338.7" y1="192.5" x2="338.7" y2="252.7" stroke="#eef0f4" stroke-width="1"/><rect x="1205.5" y="192.5" width="31.0" height="60.19999999999999" fill="#54b399"/><rect x="1461.8" y="192.5" width="30.299999999999955" height="60.19999999999999" fill="#54b399"/></svg>
<div class="a" style="left:435px;top:192px;width:1px;height:72px;background:#cdcdcd"></div>
<div class="a" style="left:595px;top:192px;width:1px;height:72px;background:#d8d8d8"></div>
<div class="a" style="left:755px;top:192px;width:1px;height:72px;background:#b5b5b5"></div>
<div class="a" style="left:915px;top:192px;width:1px;height:72px;background:#dedede"></div>
<div class="a" style="left:1076px;top:192px;width:1px;height:72px;background:#dddddd"></div>
<div class="a" style="left:1236px;top:192px;width:1px;height:72px;background:#b5b5b5"></div>
<div class="a" style="left:1396px;top:192px;width:1px;height:72px;background:#d6d6d6"></div>
<div class="a" style="left:1557px;top:192px;width:1px;height:72px;background:#dadada"></div>
<div class="a" style="left:1717px;top:192px;width:1px;height:72px;background:#b0b0b0"></div>
<div class="a" style="left:1877px;top:192px;width:1px;height:72px;background:#d3d3d3"></div>
<div id="t56" class="a s" style="left:340.50px;top:256.00px;font-size:9.6px;color:#69707d;letter-spacing:-0.073px;">14:42:30</div>
<div id="t57" class="a s" style="left:340.50px;top:265.00px;font-size:9.6px;color:#69707d;letter-spacing:-0.027px;">May 30, 2023</div>
<div id="t58" class="a s" style="left:438.00px;top:256.00px;font-size:9.6px;color:#69707d;letter-spacing:-0.001px;">14:42:35</div>
<div id="t59" class="a s" style="left:598.00px;top:256.00px;font-size:9.6px;color:#69707d;letter-spacing:-0.001px;">14:42:40</div>
<div id="t60" class="a s" style="left:758.00px;top:256.00px;font-size:9.6px;color:#69707d;letter-spacing:-0.001px;">14:42:45</div>
<div id="t61" class="a s" style="left:918.00px;top:256.00px;font-size:9.6px;color:#69707d;letter-spacing:-0.001px;">14:42:50</div>
<div id="t62" class="a s" style="left:1079.00px;top:256.00px;font-size:9.6px;color:#69707d;letter-spacing:-0.001px;">14:42:55</div>
<div id="t63" class="a s" style="left:1239.00px;top:256.00px;font-size:9.6px;color:#69707d;letter-spacing:-0.001px;">14:43:00</div>
<div id="t64" class="a s" style="left:1399.00px;top:256.00px;font-size:9.6px;color:#69707d;letter-spacing:-0.001px;">14:43:05</div>
<div id="t65" class="a s" style="left:1560.00px;top:256.00px;font-size:9.6px;color:#69707d;letter-spacing:-0.001px;">14:43:10</div>
<div id="t66" class="a s" style="left:1720.00px;top:256.00px;font-size:9.6px;color:#69707d;letter-spacing:-0.001px;">14:43:15</div>
<div id="t67" class="a s" style="left:324.50px;top:187.00px;font-size:9.6px;color:#69707d;letter-spacing:0.03em;">2</div>
<div id="t68" class="a s" style="left:324.50px;top:217.00px;font-size:9.6px;color:#69707d;letter-spacing:0.03em;">1</div>
<div id="t69" class="a s" style="left:324.50px;top:247.00px;font-size:9.6px;color:#69707d;letter-spacing:0.03em;">0</div>
<div id="t70" class="a s" style="left:889.60px;top:283.00px;font-size:11px;color:#343741;letter-spacing:0.196px;">May 30, 2023 @ 14:42:31.961 - May 30, 2023 @ 14:43:20.294 (interval: Auto - second)</div>
<div class="a" style="left:1104.7px;top:307.5px;width:10.6px;height:1.3px;background:#343741"></div>
<div class="a" style="left:1104.7px;top:311.2px;width:10.6px;height:1.3px;background:#343741"></div>
<div id="t71" class="a s" style="left:320.00px;top:327.00px;font-size:11px;color:#0071c2;font-weight:700;letter-spacing:0.027px;">Documents</div>
<div id="t72" class="a s" style="left:398.50px;top:327.00px;font-size:11px;color:#1a1c21;font-weight:700;letter-spacing:0.014px;">Field statistics</div>
<div class="a" style="left:482.3px;top:324px;width:43.3px;height:17.6px;border:1px solid #d3dae6;border-radius:9px;box-sizing:border-box;background:#fafbfd"></div>
<div id="t73" class="a s" style="left:493.00px;top:330.00px;font-size:7.6px;color:#1a1c21;font-weight:700;letter-spacing:0.259px;">BETA</div>
<div class="a" style="left:309px;top:345px;width:1603px;height:1px;background:#d3dae6"></div>
<div class="a" style="left:316px;top:344px;width:68px;height:2px;background:#0067bd"></div>
<svg class="a" style="left:316.5px;top:356.5px;" width="10" height="8" viewBox="0 0 10 8"><g fill="#464b55"><rect x="0.2" y="0.6" width="1.6" height="0.95"/><rect x="3.4" y="0.6" width="6.0" height="0.95"/><rect x="0.2" y="2.6" width="1.6" height="0.95"/><rect x="3.4" y="2.6" width="6.0" height="0.95"/><rect x="0.2" y="4.6" width="1.6" height="0.95"/><rect x="3.4" y="4.6" width="6.0" height="0.95"/><rect x="0.2" y="6.6" width="1.6" height="0.95"/><rect x="3.4" y="6.6" width="6.0" height="0.95"/></g></svg>
<div id="t74" class="a s" style="left:334.60px;top:355.00px;font-size:11px;color:#343741;-webkit-text-stroke-width:0.22px;letter-spacing:0.083px;">Columns</div>
<svg class="a" style="left:396.5px;top:355.5px;" width="7" height="10" viewBox="0 0 7 10"><path d="M0.8 3.3 L3.5 0.8 L6.2 3.3 M0.8 6.5 L3.5 9 L6.2 6.5" fill="none" stroke="#343741" stroke-width="0.95"/><path d="M3.5 1.2 V8.6" stroke="#8a8f98" stroke-width="0.8"/></svg>
<div id="t75" class="a s" style="left:413.75px;top:355.00px;font-size:11px;color:#343741;-webkit-text-stroke-width:0.4px;letter-spacing:0.307px;">1 field sorted</div>
<svg class="a" style="left:1862px;top:354px;" width="14" height="14" viewBox="0 0 14 14"><rect x="0.55" y="0.55" width="12.9" height="12.9" rx="1.3" fill="none" stroke="#343741" stroke-width="1.1"/><rect x="1.1" y="2.3" width="11.8" height="1.6" fill="#a4a9b1"/><rect x="1.1" y="11.4" width="11.8" height="1.2" fill="#a4a9b1"/><g fill="#343741"><rect x="2.0" y="5.5" width="1.9" height="0.95"/><rect x="5.7" y="5.5" width="2.9" height="0.95"/><rect x="9.9" y="5.5" width="1.9" height="0.95"/><rect x="2.0" y="7.6" width="1.9" height="0.95"/><rect x="5.7" y="7.6" width="2.9" height="0.95"/><rect x="9.9" y="7.6" width="1.9" height="0.95"/><rect x="2.0" y="9.7" width="1.9" height="0.95"/><rect x="5.7" y="9.7" width="2.9" height="0.95"/><rect x="9.9" y="9.7" width="1.9" height="0.95"/></g></svg>
<svg class="a" style="left:1890px;top:354px;" width="14" height="14" viewBox="0 0 14 14"><rect x="0.55" y="0.55" width="12.9" height="12.9" rx="1.3" fill="none" stroke="#343741" stroke-width="1.1"/><path d="M3 5.6 V3.1 H5.4 M8.6 3.1 H11 V5.6 M11 8.4 V10.9 H8.6 M5.4 10.9 H3 V8.4" fill="none" stroke="#4a4f5a" stroke-width="1"/></svg>
<div class="a" style="left:309px;top:375px;width:1603px;height:1px;background:#d3dae6"></div>
<div class="a" style="left:309px;top:376px;width:1603px;height:21px;background:#f5f7fa"></div>
<div class="a" style="left:309px;top:397px;width:1603px;height:1px;background:#d3dae6"></div>
<div class="a" style="left:309px;top:398px;width:1603px;height:164px;background:#fff"></div>
<div class="a" style="left:309px;top:439px;width:1603px;height:1px;background:#d3dae6"></div>
<div class="a" style="left:309px;top:480px;width:1603px;height:1px;background:#d3dae6"></div>
<div class="a" style="left:309px;top:521px;width:1603px;height:1px;background:#d3dae6"></div>
<div class="a" style="left:309px;top:562px;width:1603px;height:1px;background:#d3dae6"></div>
<div class="a" style="left:351px;top:375px;width:1px;height:22px;background:#d3dae6"></div>
<div class="a" style="left:351px;top:398px;width:1px;height:164px;background:#e9edf3"></div>
<div class="a" style="left:539px;top:375px;width:1px;height:22px;background:#d3dae6"></div>
<div class="a" style="left:539px;top:398px;width:1px;height:164px;background:#e9edf3"></div>
<div class="a" style="left:711px;top:375px;width:1px;height:22px;background:#d3dae6"></div>
<div class="a" style="left:711px;top:398px;width:1px;height:164px;background:#e9edf3"></div>
<div class="a" style="left:882px;top:375px;width:1px;height:22px;background:#d3dae6"></div>
<div class="a" style="left:882px;top:398px;width:1px;height:164px;background:#e9edf3"></div>
<div class="a" style="left:1054px;top:375px;width:1px;height:22px;background:#d3dae6"></div>
<div class="a" style="left:1054px;top:398px;width:1px;height:164px;background:#e9edf3"></div>
<div class="a" style="left:1225px;top:375px;width:1px;height:22px;background:#d3dae6"></div>
<div class="a" style="left:1225px;top:398px;width:1px;height:164px;background:#e9edf3"></div>
<div class="a" style="left:1397px;top:375px;width:1px;height:22px;background:#d3dae6"></div>
<div class="a" style="left:1397px;top:398px;width:1px;height:164px;background:#e9edf3"></div>
<div class="a" style="left:1568px;top:375px;width:1px;height:22px;background:#d3dae6"></div>
<div class="a" style="left:1568px;top:398px;width:1px;height:164px;background:#e9edf3"></div>
<div class="a" style="left:1739px;top:375px;width:1px;height:22px;background:#d3dae6"></div>
<div class="a" style="left:1739px;top:398px;width:1px;height:164px;background:#e9edf3"></div>
<svg class="a" style="left:357px;top:381.8px;" width="11" height="11" viewBox="0 0 11 11"><path d="M5.5 0.8 V10 M1.2 5.8 L5.5 10.1 L9.8 5.8" fill="none" stroke="#343741" stroke-width="1.1"/></svg>
<div id="t76" class="a s" style="left:374.00px;top:381.00px;font-size:11px;color:#343741;font-weight:700;letter-spacing:0.064px;">@timestamp</div>
<svg class="a" style="left:444px;top:380.5px;" width="12" height="12" viewBox="0 0 12 12"><circle cx="6" cy="6" r="5.2" fill="none" stroke="#343741" stroke-width="1"/><path d="M6 2.8 V6.3 H8.8" fill="none" stroke="#343741" stroke-width="1"/></svg>
<svg class="a" style="left:525.3px;top:383.5px;" width="10" height="6" viewBox="0 0 10 6"><path d="M0.8 0.8 L5 5 L9.2 0.8" fill="none" stroke="#343741" stroke-width="1.1"/></svg>
<div id="t77" class="a s" style="left:543.90px;top:381.00px;font-size:11px;color:#343741;font-weight:700;letter-spacing:-0.081px;">user_agent</div>
<svg class="a" style="left:697.3px;top:383.5px;" width="10" height="6" viewBox="0 0 10 6"><path d="M0.8 0.8 L5 5 L9.2 0.8" fill="none" stroke="#343741" stroke-width="1.1"/></svg>
<div id="t78" class="a s" style="left:715.10px;top:381.00px;font-size:11px;color:#343741;font-weight:700;letter-spacing:0.046px;">programname</div>
<svg class="a" style="left:868.3px;top:383.5px;" width="10" height="6" viewBox="0 0 10 6"><path d="M0.8 0.8 L5 5 L9.2 0.8" fill="none" stroke="#343741" stroke-width="1.1"/></svg>
<div id="t79" class="a s" style="left:886.60px;top:381.00px;font-size:11px;color:#343741;font-weight:700;letter-spacing:-0.056px;">sysloghost</div>
<svg class="a" style="left:1040.3px;top:383.5px;" width="10" height="6" viewBox="0 0 10 6"><path d="M0.8 0.8 L5 5 L9.2 0.8" fill="none" stroke="#343741" stroke-width="1.1"/></svg>
<div id="t80" class="a s" style="left:1058.10px;top:381.00px;font-size:11px;color:#343741;font-weight:700;letter-spacing:0.142px;">request_method</div>
<svg class="a" style="left:1211.3px;top:383.5px;" width="10" height="6" viewBox="0 0 10 6"><path d="M0.8 0.8 L5 5 L9.2 0.8" fill="none" stroke="#343741" stroke-width="1.1"/></svg>
<div id="t81" class="a s" style="left:1229.60px;top:381.00px;font-size:11px;color:#343741;font-weight:700;letter-spacing:0.068px;">request_path</div>
<svg class="a" style="left:1383.3px;top:383.5px;" width="10" height="6" viewBox="0 0 10 6"><path d="M0.8 0.8 L5 5 L9.2 0.8" fill="none" stroke="#343741" stroke-width="1.1"/></svg>
<div id="t82" class="a s" style="left:1401.30px;top:381.00px;font-size:11px;color:#343741;font-weight:700;letter-spacing:0.001px;">status_int</div>
<svg class="a" style="left:1554.3px;top:383.5px;" width="10" height="6" viewBox="0 0 10 6"><path d="M0.8 0.8 L5 5 L9.2 0.8" fill="none" stroke="#343741" stroke-width="1.1"/></svg>
<div id="t83" class="a s" style="left:1572.70px;top:381.00px;font-size:11px;color:#343741;font-weight:700;letter-spacing:0.055px;">message</div>
<svg class="a" style="left:1725.3px;top:383.5px;" width="10" height="6" viewBox="0 0 10 6"><path d="M0.8 0.8 L5 5 L9.2 0.8" fill="none" stroke="#343741" stroke-width="1.1"/></svg>
<div id="t84" class="a s" style="left:1744.50px;top:381.00px;font-size:11px;color:#343741;font-weight:700;letter-spacing:-0.025px;">partition_number</div>
<svg class="a" style="left:1898.3px;top:383.5px;" width="10" height="6" viewBox="0 0 10 6"><path d="M0.8 0.8 L5 5 L9.2 0.8" fill="none" stroke="#343741" stroke-width="1.1"/></svg>
<svg class="a" style="left:314px;top:404px;" width="10.5" height="10.5" viewBox="0 0 10.5 10.5"><path d="M0.9 9.6 L9.6 0.9 M0.9 6.2 V9.6 H4.3 M6.2 0.9 H9.6 V4.3" fill="none" stroke="#69707d" stroke-width="0.85"/></svg>
<div class="a" style="left:334px;top:402.3px;width:14.2px;height:14.6px;border:1px solid #c9cfd9;border-radius:3px;box-sizing:border-box;background:#fff"></div>
<div id="t85" class="a m" style="left:355.20px;top:407.00px;font-size:10.8px;color:#40454e;">May 30, 2023 @ 14:43:07.177</div>
<div id="t86" class="a m" style="left:543.00px;top:407.00px;font-size:10.8px;color:#40454e;">container-updater 45</div>
<div id="t87" class="a m" style="left:715.00px;top:407.00px;font-size:10.8px;color:#40454e;">account-server</div>
<div id="t88" class="a m" style="left:886.00px;top:407.00px;font-size:10.8px;color:#40454e;">m-r1z1s3</div>
<div id="t89" class="a m" style="left:1058.00px;top:407.00px;font-size:10.8px;color:#40454e;">PUT</div>
<div id="t90" class="a m" style="left:1229.00px;top:407.00px;font-size:10.8px;color:#40454e;">/sdb/293/AUTH_test/c0</div>
<div id="t91" class="a m" style="left:1401.00px;top:407.00px;font-size:10.8px;color:#40454e;">201</div>
<div id="t92" class="a m" style="left:1572.00px;top:408.00px;font-size:10.8px;color:#40454e;"> 10.65.0.175 - - [30/May</div>
<div id="t93" class="a m" style="left:1572.00px;top:425.00px;font-size:10.8px;color:#40454e;">/2023:11:13:07 +0000] …</div>
<div id="t94" class="a m" style="left:1743.00px;top:407.00px;font-size:10.8px;color:#40454e;">293</div>
<svg class="a" style="left:314px;top:445px;" width="10.5" height="10.5" viewBox="0 0 10.5 10.5"><path d="M0.9 9.6 L9.6 0.9 M0.9 6.2 V9.6 H4.3 M6.2 0.9 H9.6 V4.3" fill="none" stroke="#69707d" stroke-width="0.85"/></svg>
<div class="a" style="left:334px;top:443.3px;width:14.2px;height:14.6px;border:1px solid #c9cfd9;border-radius:3px;box-sizing:border-box;background:#fff"></div>
<div id="t95" class="a m" style="left:355.20px;top:448.00px;font-size:10.8px;color:#40454e;">May 30, 2023 @ 14:43:07.175</div>
<div id="t96" class="a m" style="left:543.00px;top:448.00px;font-size:10.8px;color:#40454e;">container-updater 45</div>
<div id="t97" class="a m" style="left:715.00px;top:448.00px;font-size:10.8px;color:#40454e;">account-server</div>
<div id="t98" class="a m" style="left:886.00px;top:448.00px;font-size:10.8px;color:#40454e;">m-r1z1s2</div>
<div id="t99" class="a m" style="left:1058.00px;top:448.00px;font-size:10.8px;color:#40454e;">PUT</div>
<div id="t100" class="a m" style="left:1229.00px;top:448.00px;font-size:10.8px;color:#40454e;">/sdb/293/AUTH_test/c0</div>
<div id="t101" class="a m" style="left:1401.00px;top:448.00px;font-size:10.8px;color:#40454e;">201</div>
<div id="t102" class="a m" style="left:1572.00px;top:449.00px;font-size:10.8px;color:#40454e;"> 10.65.0.175 - - [30/May</div>
<div id="t103" class="a m" style="left:1572.00px;top:466.00px;font-size:10.8px;color:#40454e;">/2023:11:13:07 +0000] …</div>
<div id="t104" class="a m" style="left:1743.00px;top:448.00px;font-size:10.8px;color:#40454e;">293</div>
<svg class="a" style="left:314px;top:486px;" width="10.5" height="10.5" viewBox="0 0 10.5 10.5"><path d="M0.9 9.6 L9.6 0.9 M0.9 6.2 V9.6 H4.3 M6.2 0.9 H9.6 V4.3" fill="none" stroke="#69707d" stroke-width="0.85"/></svg>
<div class="a" style="left:334px;top:484.3px;width:14.2px;height:14.6px;border:1px solid #c9cfd9;border-radius:3px;box-sizing:border-box;background:#fff"></div>
<div id="t105" class="a m" style="left:355.20px;top:490.00px;font-size:10.8px;color:#40454e;">May 30, 2023 @ 14:42:59.450</div>
<div id="t106" class="a m" style="left:543.00px;top:490.00px;font-size:10.8px;color:#40454e;">container-updater 51</div>
<div id="t107" class="a m" style="left:715.00px;top:490.00px;font-size:10.8px;color:#40454e;">account-server</div>
<div id="t108" class="a m" style="left:886.00px;top:490.00px;font-size:10.8px;color:#40454e;">m-r1z1s3</div>
<div id="t109" class="a m" style="left:1058.00px;top:490.00px;font-size:10.8px;color:#40454e;">PUT</div>
<div id="t110" class="a m" style="left:1229.00px;top:490.00px;font-size:10.8px;color:#40454e;">/sdb/293/AUTH_test/c0</div>
<div id="t111" class="a m" style="left:1401.00px;top:490.00px;font-size:10.8px;color:#40454e;">201</div>
<div id="t112" class="a m" style="left:1572.00px;top:491.00px;font-size:10.8px;color:#40454e;"> 10.65.0.176 - - [30/May</div>
<div id="t113" class="a m" style="left:1572.00px;top:508.00px;font-size:10.8px;color:#40454e;">/2023:11:12:59 +0000] …</div>
<div id="t114" class="a m" style="left:1743.00px;top:490.00px;font-size:10.8px;color:#40454e;">293</div>
<svg class="a" style="left:314px;top:527px;" width="10.5" height="10.5" viewBox="0 0 10.5 10.5"><path d="M0.9 9.6 L9.6 0.9 M0.9 6.2 V9.6 H4.3 M6.2 0.9 H9.6 V4.3" fill="none" stroke="#69707d" stroke-width="0.85"/></svg>
<div class="a" style="left:334px;top:525.3px;width:14.2px;height:14.6px;border:1px solid #c9cfd9;border-radius:3px;box-sizing:border-box;background:#fff"></div>
<div id="t115" class="a m" style="left:355.20px;top:531.00px;font-size:10.8px;color:#40454e;">May 30, 2023 @ 14:42:59.448</div>
<div id="t116" class="a m" style="left:543.00px;top:531.00px;font-size:10.8px;color:#40454e;">container-updater 51</div>
<div id="t117" class="a m" style="left:715.00px;top:531.00px;font-size:10.8px;color:#40454e;">account-server</div>
<div id="t118" class="a m" style="left:886.00px;top:531.00px;font-size:10.8px;color:#40454e;">m-r1z1s2</div>
<div id="t119" class="a m" style="left:1058.00px;top:531.00px;font-size:10.8px;color:#40454e;">PUT</div>
<div id="t120" class="a m" style="left:1229.00px;top:531.00px;font-size:10.8px;color:#40454e;">/sdb/293/AUTH_test/c0</div>
<div id="t121" class="a m" style="left:1401.00px;top:531.00px;font-size:10.8px;color:#40454e;">201</div>
<div id="t122" class="a m" style="left:1572.00px;top:532.00px;font-size:10.8px;color:#40454e;"> 172.19.0.2 - - [30/May</div>
<div id="t123" class="a m" style="left:1572.00px;top:549.00px;font-size:10.8px;color:#40454e;">/2023:11:12:59 +0000] …</div>
<div id="t124" class="a m" style="left:1743.00px;top:531.00px;font-size:10.8px;color:#40454e;">293</div></body></html>
